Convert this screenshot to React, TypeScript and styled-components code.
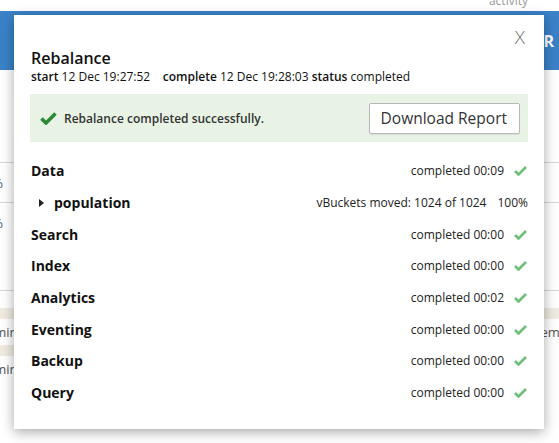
import React from "react";
import styled, { createGlobalStyle } from "styled-components";

const Global = createGlobalStyle`
  html, body { margin: 0; padding: 0; background: #fff; }
  body { font-family: "Open Sans", "Liberation Sans", sans-serif; color: #1d1d1d; }
  * { box-sizing: border-box; }
`;

const Page = styled.div`
  position: relative;
  width: 559px;
  height: 443px;
  overflow: hidden;
  background: #fff;
`;

const TopStrip = styled.div`
  height: 11px;
  display: flex;
  justify-content: flex-end;
  align-items: flex-end;
  padding-right: 31px;
  overflow: hidden;
`;

const TopLink = styled.span`
  font-size: 12px;
  line-height: 12px;
  color: #9a9a9a;
  margin-bottom: 4px;
`;

const Header = styled.div`
  height: 59px;
  background: #3a82c8;
  display: flex;
  align-items: center;
  justify-content: flex-end;
  padding-right: 5px;
`;

const HeaderText = styled.span`
  color: #fff;
  font-size: 16px;
  font-weight: 700;
`;

const Bg = styled.div`
  padding-top: 92px;
`;

const BgRow = styled.div<{ $h: number; $line?: boolean }>`
  height: ${(p) => p.$h}px;
  border-top: ${(p) => (p.$line ? "1px solid #d6d6d6" : "none")};
  display: flex;
  justify-content: space-between;
  align-items: center;
  font-size: 13px;
  color: #3b5a7a;
  overflow: hidden;
`;

const BgBar = styled.div<{ $w: string }>`
  height: 11px;
  width: ${(p) => p.$w};
  background: #efebe1;
`;

const BgCellLeft = styled.span<{ $shift?: number }>`
  margin-left: -30px;
  margin-top: ${(p) => p.$shift ?? 0}px;
  color: #2f4f72;
`;

const BgNote = styled.div`
  height: 26px;
  display: flex;
  justify-content: space-between;
  align-items: center;
  font-size: 13px;
  color: #555;
  overflow: hidden;
`;

const NoteLeft = styled.span`
  margin-left: -22px;
`;

const NoteRight = styled.span`
  margin-right: -8px;
`;

const Modal = styled.div`
  position: absolute;
  left: 14px;
  top: 15px;
  width: 530px;
  height: 414px;
  background: #fff;
  box-shadow: 0 3px 12px rgba(0, 0, 0, 0.35);
  padding: 33px 16px 0 16px;
`;

const Close = styled.span`
  position: absolute;
  right: 19px;
  top: 9px;
  font-size: 19px;
  font-weight: 300;
  color: #777;
`;

const Title = styled.h2`
  margin: 0 0 0 1px;
  font-size: 16px;
  font-weight: 600;
  line-height: 20px;
  color: #111;
`;

const Meta = styled.div`
  margin: 0 0 0 1px;
  font-size: 12px;
  line-height: 17px;
  color: #111;
`;

const B = styled.b`
  font-weight: 600;
`;

const Alert = styled.div`
  margin-top: 9px;
  height: 48px;
  background: #e8f3e6;
  display: flex;
  align-items: center;
  padding: 0 8px 0 10px;
`;

const AlertText = styled.span`
  margin-left: 7px;
  font-size: 12px;
  font-weight: 600;
  color: #333;
  flex: 1;
`;

const Button = styled.button`
  height: 31px;
  padding: 0 12px 0 11px;
  background: #fff;
  border: 1px solid #b8b8b8;
  border-radius: 2px;
  font-family: "Open Sans", sans-serif;
  font-size: 15.5px;
  color: #333;
  box-shadow: 0 1px 1px rgba(0, 0, 0, 0.08);
`;

const Rows = styled.div`
  margin-top: 13px;
`;

const Row = styled.div<{ $indent?: boolean }>`
  height: 31.7px;
  display: flex;
  align-items: center;
  padding-left: ${(p) => (p.$indent ? "9px" : "1px")};
`;

const Label = styled.span`
  font-size: 14px;
  font-weight: 700;
  color: #111;
  flex: 1;
  display: flex;
  align-items: center;
`;

const Caret = styled.span`
  width: 0;
  height: 0;
  border-top: 4px solid transparent;
  border-bottom: 4px solid transparent;
  border-left: 5px solid #222;
  margin-right: 10px;
`;

const Status = styled.span`
  font-size: 12px;
  color: #222;
`;

const Pct = styled.span`
  font-size: 12px;
  color: #222;
  margin-left: 11px;
`;

const CheckWrap = styled.span`
  display: inline-flex;
  margin-left: 10px;
  margin-right: 1px;
`;

const SmallCheck = () => (
  <CheckWrap>
    <svg width="13" height="11" viewBox="0 0 13 11">
      <path d="M1 6 L4.5 9.5 L12 2" fill="none" stroke="#6cbf78" strokeWidth="2.6" strokeLinejoin="miter" />
    </svg>
  </CheckWrap>
);

const BigCheck = () => (
  <svg width="17" height="14" viewBox="0 0 17 14">
    <path d="M1.5 7.5 L6 12 L15.5 2.5" fill="none" stroke="#2a8b34" strokeWidth="3.6" strokeLinejoin="miter" />
  </svg>
);

const services = [
  { name: "Data", time: "00:09" },
  { name: "Search", time: "00:00" },
  { name: "Index", time: "00:00" },
  { name: "Analytics", time: "00:02" },
  { name: "Eventing", time: "00:00" },
  { name: "Backup", time: "00:00" },
  { name: "Query", time: "00:00" },
];

export default function App() {
  return (
    <Page>
      <Global />
      <TopStrip>
        <TopLink>activity</TopLink>
      </TopStrip>
      <Header>
        <HeaderText>R</HeaderText>
      </Header>
      <Bg>
        <BgRow $h={40} $line>
          <BgCellLeft>100%</BgCellLeft>
        </BgRow>
        <BgRow $h={88} $line>
          <BgCellLeft $shift={-48}>100%</BgCellLeft>
        </BgRow>
        <BgRow $h={18} $line />
        <BgBar $w="100%" />
        <BgNote>
          <NoteLeft>Admini</NoteLeft>
          <NoteRight>ema</NoteRight>
        </BgNote>
        <BgBar $w="60%" />
        <BgNote>
          <NoteLeft>Admini</NoteLeft>
        </BgNote>
      </Bg>
      <Modal>
        <Close>X</Close>
        <Title>Rebalance</Title>
        <Meta>
          <B>start</B> 12 Dec 19:27:52&nbsp;&nbsp;&nbsp; <B>complete</B> 12 Dec 19:28:03 <B>status</B> completed
        </Meta>
        <Alert>
          <BigCheck />
          <AlertText>Rebalance completed successfully.</AlertText>
          <Button>Download Report</Button>
        </Alert>
        <Rows>
          {services.map((s, i) => (
            <React.Fragment key={s.name}>
              <Row>
                <Label>{s.name}</Label>
                <Status>completed {s.time}</Status>
                <SmallCheck />
              </Row>
              {i === 0 && (
                <Row $indent>
                  <Label>
                    <Caret />
                    population
                  </Label>
                  <Status>vBuckets moved: 1024 of 1024</Status>
                  <Pct>100%</Pct>
                </Row>
              )}
            </React.Fragment>
          ))}
        </Rows>
      </Modal>
    </Page>
  );
}
